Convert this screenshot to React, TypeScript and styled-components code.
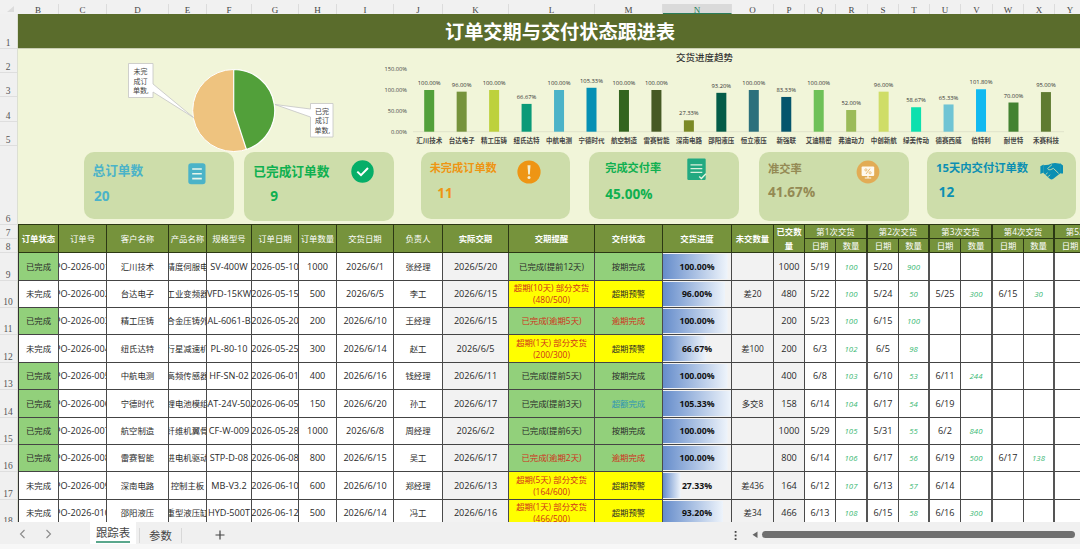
import React from "react";
import styled, { createGlobalStyle, css } from "styled-components";

const Global = createGlobalStyle`
  html, body { margin: 0; padding: 0; }
  body { width: 1080px; height: 549px; overflow: hidden; background: #f0f0f0;
    font-family: "Open Sans", "Noto Sans CJK SC", sans-serif; }
  * { box-sizing: border-box; }
`;

const COLS = [41, 48, 62, 38, 45, 47, 38, 57, 49, 66, 86, 68, 69, 42, 31, 31, 32, 31, 31, 31, 32, 31, 31, 31];
const LETTERS = "BCDEFGHIJKLMNOPQRSTUVWXY".split("");
/* The table's left rule takes the first pixel of column B; one more column runs past the window edge. */
const TEMPLATE = [40, ...COLS.slice(1), 31].map((w) => `${w}px`).join(" ");

const Window = styled.div`
  width: 1080px;
  height: 549px;
  display: flex;
  flex-direction: column;
  overflow: hidden;
  background: #f0f0f0;
`;

const ColumnStrip = styled.div`
  display: flex;
  flex: 0 0 14px;
  padding-top: 4px;
  background: #f1f1f1;
`;

const Corner = styled.div`
  flex: 0 0 18px;
  display: flex;
  justify-content: flex-end;
  align-items: flex-end;
  padding: 0 4px 2px 0;
`;

const ColumnLetter = styled.div<{ $w: number; $active?: boolean }>`
  flex: 0 0 ${(p) => p.$w}px;
  height: 10px;
  font: 9px/12px "Liberation Serif", serif;
  text-align: center;
  color: ${(p) => (p.$active ? "#217a58" : "#444")};
  border-right: 1px solid #dcdcdc;
  ${(p) => p.$active && css`background: #dadada; border-bottom: 1px solid #2b7d5b;`}
`;

const Body = styled.div`
  display: flex;
  flex: 0 0 508px;
  overflow: hidden;
`;

const Gutter = styled.div`
  flex: 0 0 18px;
  background: #f0f0f0;
  border-right: 1px solid #dcdfd3;
`;

const RowNumber = styled.div<{ $h: number }>`
  height: ${(p) => p.$h}px;
  display: flex;
  align-items: flex-end;
  justify-content: center;
  padding-right: 1px;
  border-bottom: 1px solid #dedede;
  font: 9.5px/9px "Liberation Serif", serif;
  color: #555;
`;

const Content = styled.div`
  flex: 0 0 1062px;
  overflow: hidden;
`;

const TitleBand = styled.h1`
  margin: 0;
  height: 34px;
  display: flex;
  align-items: center;
  padding: 0 0 0 427px;
  background: #5a6c2c;
  color: #fff;
  font-size: 19.2px;
  font-weight: 700;
  white-space: nowrap;
`;

const Dashboard = styled.div`
  height: 176px;
  background: #f1f5d9;
  border-top: 1px solid #c9ceb4;
`;

const Charts = styled.div`
  display: flex;
  align-items: flex-start;
  height: 103.4px;
`;

const CardRow = styled.div`
  display: flex;
  align-items: flex-start;
  padding-left: 66px;
`;

const Card = styled.div<{ $gap: number; $tall?: boolean }>`
  flex: 0 0 149.7px;
  height: ${(p) => (p.$tall ? 68.3 : 67)}px;
  margin-right: ${(p) => p.$gap}px;
  display: flex;
  align-items: flex-start;
  justify-content: space-between;
  background: #cdddaa;
  border-radius: 10px;
`;

const CardText = styled.div<{ $x: number; $y: number; $c: string }>`
  padding: ${(p) => p.$y}px 0 0 ${(p) => p.$x}px;
  color: ${(p) => p.$c};
  font-weight: 700;
  white-space: nowrap;
`;

const CardTitle = styled.div<{ $s: number }>`
  font-size: ${(p) => p.$s}px;
  line-height: 16px;
`;

const CardValue = styled.div<{ $x: number; $y: number }>`
  font-size: 13.6px;
  line-height: 16px;
  padding: ${(p) => p.$y}px 0 0 ${(p) => p.$x}px;
`;

const CardIcon = styled.div<{ $r: number; $y: number }>`
  margin: ${(p) => p.$y}px ${(p) => p.$r}px 0 0;
  line-height: 0;
`;

const TableHead = styled.div`
  display: grid;
  grid-template-columns: ${TEMPLATE};
  grid-template-rows: 14px 14px;
  height: 29px;
  border-top: 1px solid #2c3814;
  border-left: 1px solid #2c3814;
`;

const HeadCell = styled.div<{ $bold?: boolean; $span?: "rows" | "cols"; $thick?: boolean }>`
  display: flex;
  align-items: center;
  justify-content: center;
  text-align: center;
  overflow: hidden;
  white-space: nowrap;
  background: #76933c;
  color: #fff;
  font-size: 8.4px;
  line-height: 13.5px;
  font-weight: ${(p) => (p.$bold ? 700 : 400)};
  border-right: ${(p) => (p.$thick ? 2 : 1)}px solid #2c3814;
  border-bottom: 1px solid #2c3814;
  ${(p) => p.$span === "rows" && css`grid-row: span 2;`}
  ${(p) => p.$span === "cols" && css`grid-column: span 2;`}
`;

const Row = styled.div<{ $h: number }>`
  display: grid;
  grid-template-columns: ${TEMPLATE};
  height: ${(p) => p.$h}px;
  border-left: 1px solid #333;
`;

const Cell = styled.div<{ $bg?: string; $c?: string; $latin?: boolean; $thick?: boolean; $qty?: boolean }>`
  display: flex;
  align-items: center;
  justify-content: center;
  text-align: center;
  overflow: hidden;
  white-space: pre;
  background: ${(p) => p.$bg || "#fff"};
  color: ${(p) => p.$c || "#2a2a2a"};
  font-size: ${(p) => (p.$latin ? 9.15 : 8.4)}px;
  line-height: 12px;
  border-right: ${(p) => (p.$thick ? "2px solid #555" : "1px solid #4a4a4a")};
  border-bottom: 1px solid #444;
  ${(p) => p.$qty && css`color: #37b872; font-style: italic; font-size: 7.8px;`}
`;

const BarCell = styled.div<{ $pct: number }>`
  display: flex;
  align-items: center;
  justify-content: center;
  font-size: 8.7px;
  font-weight: 700;
  color: #111;
  border-right: 1px solid #4a4a4a;
  border-bottom: 1px solid #444;
  background: linear-gradient(90deg, #668dcb, #eef4fb) 0 1px / ${(p) => (p.$pct / 105.33) * 100}% calc(100% - 2px) no-repeat, #f2f2f2;
`;

const TabBar = styled.div`
  display: flex;
  flex: 0 0 22px;
  background: #f0f0f0;
  font-size: 11.4px;
  line-height: 22px;
  color: #444;
`;

const NavArrows = styled.div`
  flex: 0 0 90px;
  padding: 7px 0 0 19px;
  line-height: 0;
`;

const ActiveTab = styled.div`
  flex: 0 0 46px;
  display: flex;
  justify-content: center;
  background: #fff;
  span {
    height: 21px;
    line-height: 21px;
    border-bottom: 2px solid #5aa78c;
    white-space: nowrap;
  }
`;

const Tab = styled.div`
  flex: 0 0 43px;
  margin: 6px 0 0 3px;
  height: 15px;
  line-height: 15px;
  text-align: center;
  border-left: 1px solid #d8d8d8;
  border-right: 1px solid #d8d8d8;
`;

const AddTab = styled.div`
  flex: 1;
  padding: 8px 0 0 33px;
  line-height: 0;
`;

const ScrollArea = styled.div`
  flex: 0 0 347px;
  display: flex;
  padding-top: 9px;
`;

const Thumb = styled.div`
  width: 313px;
  height: 7px;
  margin-left: 4px;
  border-radius: 4px;
  background: #707070;
`;

const Footer = styled.div`
  flex: 1;
  background: #f7f7f7;
`;

const BARS: [string, number, string][] = [
  ["汇川技术", 100, "#52a03a"], ["台达电子", 96, "#76933c"], ["精工压铸", 100, "#bdd13d"],
  ["纽氏达特", 66.67, "#0a9a78"], ["中航电测", 100, "#4bb3c8"], ["宁德时代", 105.33, "#0690b4"],
  ["航空制造", 100, "#33641f"], ["雷赛智能", 100, "#465a24"], ["深南电路", 27.33, "#7b8a26"],
  ["邵阳液压", 93.2, "#045c48"], ["恒立液压", 100, "#2b707c"], ["新强联", 83.33, "#05556c"],
  ["艾迪精密", 100, "#6fc158"], ["弗迪动力", 52, "#9bbb59"], ["中创新航", 96, "#cfdd67"],
  ["绿美传动", 58.67, "#0de0ae"], ["德赛西威", 65.33, "#6fc4d4"], ["伯特利", 101.8, "#11b9f0"],
  ["耐世特", 70, "#438231"], ["禾赛科技", 95, "#5f7b31"],
];

const PieChart = () => (
  <svg width="352" height="103" viewBox="18 49 352 103" fontSize="7" fill="#444">
    <circle cx="233.7" cy="110.5" r="41" fill="#eec37f" stroke="#fff" strokeWidth="1" />
    <path d="M233.7 110.5V69.5A41 41 0 0 1 246.4 149.5Z" fill="#52a03a" stroke="#fff" strokeWidth="1.2" strokeLinejoin="round" />
    <path d="M128.5 63.5H153V84L193.5 117.5L153 92V97.5H128.5Z" fill="#fff" stroke="#c4c4c4" strokeWidth=".8" />
    <path d="M310.5 103.5H333V137H310.5V117L275 104.5L310.5 109Z" fill="#fff" stroke="#c4c4c4" strokeWidth=".8" />
    <text x="133.5" y="74">未完</text>
    <text x="133.5" y="83.5">成订</text>
    <text x="133" y="93">单数,</text>
    <text x="315" y="113.5">已完</text>
    <text x="315" y="123">成订</text>
    <text x="314.5" y="133">单数,</text>
  </svg>
);

const BarChart = () => (
  <svg width="710" height="103" viewBox="370 49 710 103" fill="#444">
    <text x="704.5" y="61" fontSize="9.5" textAnchor="middle" fill="#333" fontWeight="500">交货进度趋势</text>
    {[150, 100, 50, 0].map((v) => (
      <text key={v} x="407" y={133.8 - v * 0.417} fontSize="5.7" textAnchor="end">{`${v}.00%`}</text>
    ))}
    <path d="M413 131.7H1064" stroke="#dfe3cb" strokeWidth="1" />
    {BARS.map(([name, v, color], i) => {
      const x = 429.2 + i * 32.46;
      const h = v * 0.417;
      return (
        <g key={name} textAnchor="middle">
          <rect x={x - 5} y={131.7 - h} width="10" height={h} fill={color} />
          <text x={x} y={126.8 - h} fontSize="5.8" fill="#333">{`${v.toFixed(2)}%`}</text>
          <text x={x} y="142.5" fontSize="6.5" fontWeight="600">{name}</text>
        </g>
      );
    })}
  </svg>
);

const ListIcon = () => (
  <svg width="18" height="22" viewBox="0 0 18 22">
    <rect x=".3" y=".3" width="17.2" height="21" rx="2.8" fill="#4bb3c8" />
    <path d="M4.2 6H13.8M4.2 10.8H13.8M4.2 15.6H13.8" stroke="#e9f5ea" strokeWidth="1.6" />
  </svg>
);
const CheckIcon = () => (
  <svg width="23" height="23" viewBox="0 0 23 23">
    <circle cx="11.5" cy="11.5" r="11.2" fill="#05ae68" />
    <path d="M6.3 11.6L10 15.2L17 8" fill="none" stroke="#fff" strokeWidth="2" />
  </svg>
);
const AlertIcon = () => (
  <svg width="24" height="24" viewBox="0 0 24 24">
    <circle cx="12" cy="12" r="11.6" fill="#ee9514" />
    <path d="M10.5 5.2H13.5L12.8 14.4H11.2Z" fill="#f6efcf" />
    <circle cx="12" cy="17.4" r="1.5" fill="#f6efcf" />
  </svg>
);
const SheetIcon = () => (
  <svg width="20" height="23" viewBox="0 0 20 23">
    <path d="M1.5 .5H17.5Q18.7 .5 18.7 1.7V16L13.5 22H1.5Q.3 22 .3 20.8V1.7Q.3 .5 1.5 .5Z" fill="#22a981" />
    <path d="M13.5 22L18.7 16V20.8Q18.7 22 17.5 22Z" fill="#22a981" />
    <path d="M3.5 6.8H15.3M3.5 10.6H15.3M3.5 14.4H15.3" stroke="#d9f0dc" strokeWidth="1.2" />
    <path d="M12.2 18.4L14.4 20.6L19 15.8" fill="none" stroke="#e4f3df" strokeWidth="1.4" />
  </svg>
);
const BoardIcon = () => (
  <svg width="24" height="24" viewBox="0 0 24 24">
    <circle cx="12" cy="12" r="11.4" fill="#e2ac55" />
    <rect x="5.6" y="6.6" width="12.6" height="9.4" rx="1" fill="#fffaf0" />
    <path d="M12 16V18M8.8 18H15.2" stroke="#fffaf0" strokeWidth="1.2" />
    <path d="M14 8.6L10 14" stroke="#e2ac55" strokeWidth=".8" />
    <circle cx="9.9" cy="9.9" r="1.1" fill="none" stroke="#e2ac55" strokeWidth=".7" />
    <circle cx="14.1" cy="12.8" r="1.1" fill="none" stroke="#e2ac55" strokeWidth=".7" />
  </svg>
);
const HandshakeIcon = () => (
  <svg width="24" height="19" viewBox="0 0 24 19">
    <path d="M.4 4.2L3.6 2.6V10.6L.4 12Z" fill="#0b8fb3" />
    <path d="M20 1.2L23 3.6V11.4L20.6 11.6Z" fill="#0b8fb3" />
    <path d="M3.4 3.2L8.6 2.8L11.6 1.6L15 .9L20.4 1.8L21 10.8L13 17Q11.4 18 9.8 16.8L3.4 11Z" fill="#0b8fb3" />
    <path d="M12 2.6L7.6 6.6Q8.4 8.6 10.8 7.6L13.4 6.4L18.6 11.4M5.6 12.6L7.6 10.8M8 14.8L10 12.8" fill="none" stroke="#cdddaa" strokeWidth=".9" />
  </svg>
);

type CardSpec = {
  title: string; value: string; color: string; gap: number; tall?: boolean;
  x: number; y: number; size: number; vx: number; vy: number; icon: React.ReactNode; ir: number; iy: number;
};
const CARDS: CardSpec[] = [
  { title: "总订单数", value: "20", color: "#4bb3c8", gap: 10.6, x: 8.5, y: 9.3, size: 12.7, vx: 1.5, vy: 10, icon: <ListIcon />, ir: 28, iy: 11 },
  { title: "已完成订单数", value: "9", color: "#0fb050", gap: 26.7, tall: true, x: 9, y: 10.6, size: 12.7, vx: 17, vy: 9.5, icon: <CheckIcon />, ir: 20, iy: 8 },
  { title: "未完成订单数", value: "11", color: "#ee9514", gap: 18.9, x: 9, y: 8, size: 11.2, vx: 7.5, vy: 8.5, icon: <AlertIcon />, ir: 29, iy: 8 },
  { title: "完成交付率", value: "45.00%", color: "#0fb050", gap: 20, x: 16, y: 8, size: 11.2, vx: 0, vy: 9.5, icon: <SheetIcon />, ir: 31.5, iy: 5.5 },
  { title: "准交率", value: "41.67%", color: "#948a54", gap: 18, tall: true, x: 9, y: 9, size: 11.3, vx: 0, vy: 6.5, icon: <BoardIcon />, ir: 29, iy: 8 },
  { title: "15天内交付订单数", value: "12", color: "#0b8fb3", gap: 0, x: 9.5, y: 8, size: 11.3, vx: 2.5, vy: 7.5, icon: <HandshakeIcon />, ir: 12, iy: 10 },
];

const HEADS: [string, boolean][] = [
  ["订单状态", true], ["订单号", false], ["客户名称", false], ["产品名称", false], ["规格型号", false],
  ["订单日期", false], ["订单数量", false], ["交货日期", false], ["负责人", false], ["实际交期", true],
  ["交期提醒", true], ["交付状态", true], ["交货进度", true], ["未交数量", true],
];

type Order = {
  no: string; client: string; product: string; model: string; date: string; qty: string; due: string; owner: string;
  actual: string; remind: string; status: string; pct: number; gap: string; done: string; ship: string[];
};
const ORDERS: Order[] = [
  { no: "PO-2026-001", client: "汇川技术", product: "高精度伺服电机", model: "SV-400W", date: "2026-05-10", qty: "1000", due: "2026/6/1", owner: "张经理", actual: "2026/5/20", remind: "已完成(提前12天)", status: "按期完成", pct: 100, gap: "", done: "1000", ship: ["5/19", "100", "5/20", "900"] },
  { no: "PO-2026-002", client: "台达电子", product: "工业变频器", model: "VFD-15KW", date: "2026-05-15", qty: "500", due: "2026/6/5", owner: "李工", actual: "2026/6/15", remind: "超期(10天) 部分交货\n(480/500)", status: "超期预警", pct: 96, gap: "差20", done: "480", ship: ["5/22", "100", "5/24", "50", "5/25", "300", "6/15", "30"] },
  { no: "PO-2026-003", client: "精工压铸", product: "铝合金压铸外壳", model: "AL-6061-B", date: "2026-05-20", qty: "200", due: "2026/6/10", owner: "王经理", actual: "2026/6/15", remind: "已完成(逾期5天)", status: "逾期完成", pct: 100, gap: "", done: "200", ship: ["5/23", "100", "6/15", "100"] },
  { no: "PO-2026-004", client: "纽氏达特", product: "行星减速机", model: "PL-80-10", date: "2026-05-25", qty: "300", due: "2026/6/14", owner: "赵工", actual: "2026/6/5", remind: "超期(1天) 部分交货\n(200/300)", status: "超期预警", pct: 66.67, gap: "差100", done: "200", ship: ["6/3", "102", "6/5", "98"] },
  { no: "PO-2026-005", client: "中航电测", product: "高频传感器", model: "HF-SN-02", date: "2026-06-01", qty: "400", due: "2026/6/16", owner: "钱经理", actual: "2026/6/11", remind: "已完成(提前5天)", status: "按期完成", pct: 100, gap: "", done: "400", ship: ["6/8", "103", "6/10", "53", "6/11", "244"] },
  { no: "PO-2026-006", client: "宁德时代", product: "锂电池模组", model: "BAT-24V-50A", date: "2026-06-05", qty: "150", due: "2026/6/20", owner: "孙工", actual: "2026/6/17", remind: "已完成(提前3天)", status: "超额完成", pct: 105.33, gap: "多交8", done: "158", ship: ["6/14", "104", "6/17", "54", "6/19"] },
  { no: "PO-2026-007", client: "航空制造", product: "碳纤维机翼骨架", model: "CF-W-009", date: "2026-05-28", qty: "1000", due: "2026/6/8", owner: "周经理", actual: "2026/6/2", remind: "已完成(提前6天)", status: "按期完成", pct: 100, gap: "", done: "1000", ship: ["5/29", "105", "5/31", "55", "6/2", "840"] },
  { no: "PO-2026-008", client: "雷赛智能", product: "步进电机驱动器", model: "STP-D-08", date: "2026-06-08", qty: "800", due: "2026/6/15", owner: "吴工", actual: "2026/6/17", remind: "已完成(逾期2天)", status: "逾期完成", pct: 100, gap: "", done: "800", ship: ["6/14", "106", "6/17", "56", "6/19", "500", "6/17", "138"] },
  { no: "PO-2026-009", client: "深南电路", product: "控制主板", model: "MB-V3.2", date: "2026-06-10", qty: "600", due: "2026/6/10", owner: "郑经理", actual: "2026/6/13", remind: "超期(5天) 部分交货\n(164/600)", status: "超期预警", pct: 27.33, gap: "差436", done: "164", ship: ["6/12", "107", "6/13", "57", "6/14"] },
  { no: "PO-2026-010", client: "邵阳液压", product: "重型液压缸", model: "HYD-500T", date: "2026-06-12", qty: "500", due: "2026/6/14", owner: "冯工", actual: "2026/6/16", remind: "超期(1天) 部分交货\n(466/500)", status: "超期预警", pct: 93.2, gap: "差34", done: "466", ship: ["6/13", "108", "6/15", "58", "6/16", "300"] },
];
const ROW_H = [28, 27, 27, 28, 27, 28, 27, 27, 28, 27];
const GUTTER_H = [35, 24, 24, 25, 24, 79, 14, 14, ...ROW_H];

const GREEN = "#92d07b";
const GREY = "#f2f2f2";

const OrderRow = ({ o, h }: { o: Order; h: number }) => {
  const late = o.remind.startsWith("超期");
  const bg = late ? "#ffff00" : GREEN;
  const red = "#d0301c";
  const overdue = o.status === "逾期完成";
  const statusColor = overdue ? red : o.status === "超额完成" ? "#2f95b4" : undefined;
  return (
    <Row $h={h}>
      <Cell $bg={late ? undefined : GREEN}>{late ? "未完成" : "已完成"}</Cell>
      <Cell $latin>{o.no}</Cell>
      <Cell>{o.client}</Cell>
      <Cell>{o.product}</Cell>
      <Cell $latin>{o.model}</Cell>
      <Cell $latin>{o.date}</Cell>
      <Cell $latin>{o.qty}</Cell>
      <Cell $latin>{o.due}</Cell>
      <Cell>{o.owner}</Cell>
      <Cell $latin $bg={GREY}>{o.actual}</Cell>
      <Cell $bg={bg} $c={late || overdue ? red : undefined}>{o.remind}</Cell>
      <Cell $bg={bg} $c={statusColor}>{o.status}</Cell>
      <BarCell $pct={o.pct}>{`${o.pct.toFixed(2)}%`}</BarCell>
      <Cell $bg={GREY}>{o.gap}</Cell>
      <Cell $latin $bg={GREY}>{o.done}</Cell>
      {Array.from({ length: 10 }, (_, i) => (
        <Cell key={i} $latin $qty={i % 2 === 1} $thick={i % 2 === 1}>{o.ship[i] || ""}</Cell>
      ))}
    </Row>
  );
};

export default function App() {
  return (
    <Window>
      <Global />
      <ColumnStrip>
        <Corner>
          <svg width="7" height="6"><path d="M7 0V6H0Z" fill="#dcdcdc" /></svg>
        </Corner>
        {LETTERS.map((l, i) => (
          <ColumnLetter key={l} $w={COLS[i]} $active={l === "N"}>{l}</ColumnLetter>
        ))}
      </ColumnStrip>
      <Body>
        <Gutter>
          {GUTTER_H.map((h, i) => <RowNumber key={i} $h={h}>{i + 1}</RowNumber>)}
        </Gutter>
        <Content>
          <TitleBand>订单交期与交付状态跟进表</TitleBand>
          <Dashboard>
            <Charts>
              <PieChart />
              <BarChart />
            </Charts>
            <CardRow>
              {CARDS.map((c) => (
                <Card key={c.title} $gap={c.gap} $tall={c.tall}>
                  <CardText $x={c.x} $y={c.y} $c={c.color}>
                    <CardTitle $s={c.size}>{c.title}</CardTitle>
                    <CardValue $x={c.vx} $y={c.vy}>{c.value}</CardValue>
                  </CardText>
                  <CardIcon $r={c.ir} $y={c.iy}>{c.icon}</CardIcon>
                </Card>
              ))}
            </CardRow>
          </Dashboard>
          <TableHead>
            {HEADS.map(([t, b]) => <HeadCell key={t} $bold={b} $span="rows">{t}</HeadCell>)}
            <HeadCell $bold $span="rows">已交数<br />量</HeadCell>
            {[1, 2, 3, 4, 5].map((n) => <HeadCell key={n} $span="cols" $thick>{`第${n}次交货`}</HeadCell>)}
            {Array.from({ length: 9 }, (_, i) => (
              <HeadCell key={i} $thick={i % 2 === 1}>{i % 2 ? "数量" : "日期"}</HeadCell>
            ))}
          </TableHead>
          {ORDERS.map((o, i) => <OrderRow key={o.no} o={o} h={ROW_H[i]} />)}
        </Content>
      </Body>
      <TabBar>
        <NavArrows>
          <svg width="34" height="10" fill="none" stroke="#8a8a8a" strokeWidth="1.1">
            <path d="M5.5 1L1.5 5L5.5 9M27.5 1L31.5 5L27.5 9" />
          </svg>
        </NavArrows>
        <ActiveTab><span>跟踪表</span></ActiveTab>
        <Tab>参数</Tab>
        <AddTab>
          <svg width="10" height="10" stroke="#444" strokeWidth="1.2"><path d="M5 .5V9.5M.5 5H9.5" /></svg>
        </AddTab>
        <ScrollArea>
          <svg width="25" height="10" fill="#444">
            <rect x="1.7" y="0" width="1.8" height="1.8" />
            <rect x="1.7" y="3.6" width="1.8" height="1.8" />
            <rect x="1.7" y="7.2" width="1.8" height="1.8" />
            <path d="M24.5 .5V7L19.5 3.8Z" fill="#666" />
          </svg>
          <Thumb />
        </ScrollArea>
      </TabBar>
      <Footer />
    </Window>
  );
}
